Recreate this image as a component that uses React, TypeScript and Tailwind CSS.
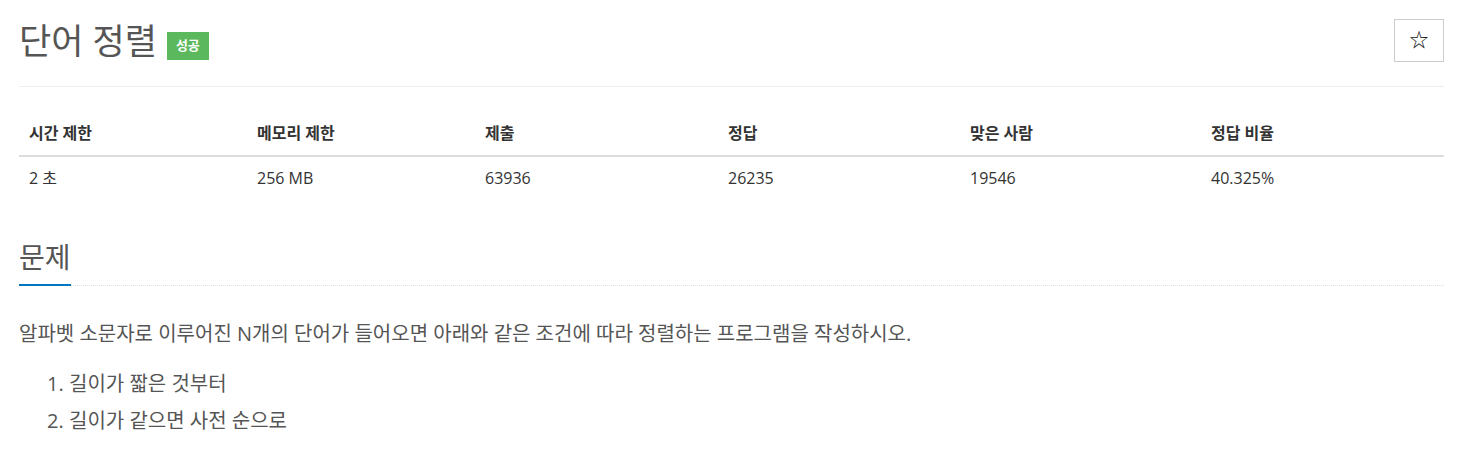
const font = "font-['Open_Sans','Noto_Sans_CJK_KR',sans-serif]";

const stats = [
  { label: "시간 제한", value: "2 초", w: "w-[228px]" },
  { label: "메모리 제한", value: "256 MB", w: "w-[228px]" },
  { label: "제출", value: "63936", w: "w-[243px]" },
  { label: "정답", value: "26235", w: "w-[242px]" },
  { label: "맞은 사람", value: "19546", w: "w-[241px]" },
  { label: "정답 비율", value: "40.325%", w: "flex-1" },
];

export default function App() {
  return (
    <div className={`${font} bg-white min-h-screen pl-[19px] pr-[21px] pt-[19px] pb-8 text-[#333]`}>
      {/* Title */}
      <div className="flex items-start justify-between pb-[24px] border-b border-[#eee]">
        <div className="flex items-center gap-[10px] pt-[2px]">
          <h1 className="text-[35px] leading-[40px] text-[#555] font-normal">단어 정렬</h1>
          <span className="mt-[9px] h-[28px] flex items-center bg-[#5cb85c] text-white text-[13px] font-bold px-[9px]">
            성공
          </span>
        </div>
        <button className="w-[50px] h-[43px] border border-[#ccc] bg-white flex items-center justify-center text-[19px] text-[#111]">
          ☆
        </button>
      </div>

      {/* Stats table */}
      <div className="mt-[24px]">
        <div className="flex border-b-2 border-[#ddd]">
          {stats.map((s) => (
            <div key={s.label} className={`${s.w} px-[10px] py-[11px] text-[16px] leading-[22px] font-bold`}>
              {s.label}
            </div>
          ))}
        </div>
        <div className="flex">
          {stats.map((s) => (
            <div key={s.label} className={`${s.w} px-[10px] py-[10px] text-[16px] leading-[22px]`}>
              {s.value}
            </div>
          ))}
        </div>
      </div>

      {/* Problem section */}
      <section className="mt-[39px]">
        <div className="border-b border-dotted border-[#ddd]">
          <h2 className="inline-block text-[28px] leading-[38px] text-[#555] pb-[8px] border-b-2 border-[#0076c0] -mb-px">
            문제
          </h2>
        </div>
        <p className="mt-[33px] text-[20px] leading-[30px] text-[#555]">
          알파벳 소문자로 이루어진 N개의 단어가 들어오면 아래와 같은 조건에 따라 정렬하는 프로그램을 작성하시오.
        </p>
        <ol className="list-decimal pl-[50px] mt-[16px] text-[20px] leading-[37px] text-[#555]">
          <li>길이가 짧은 것부터</li>
          <li>길이가 같으면 사전 순으로</li>
        </ol>
      </section>
    </div>
  );
}
